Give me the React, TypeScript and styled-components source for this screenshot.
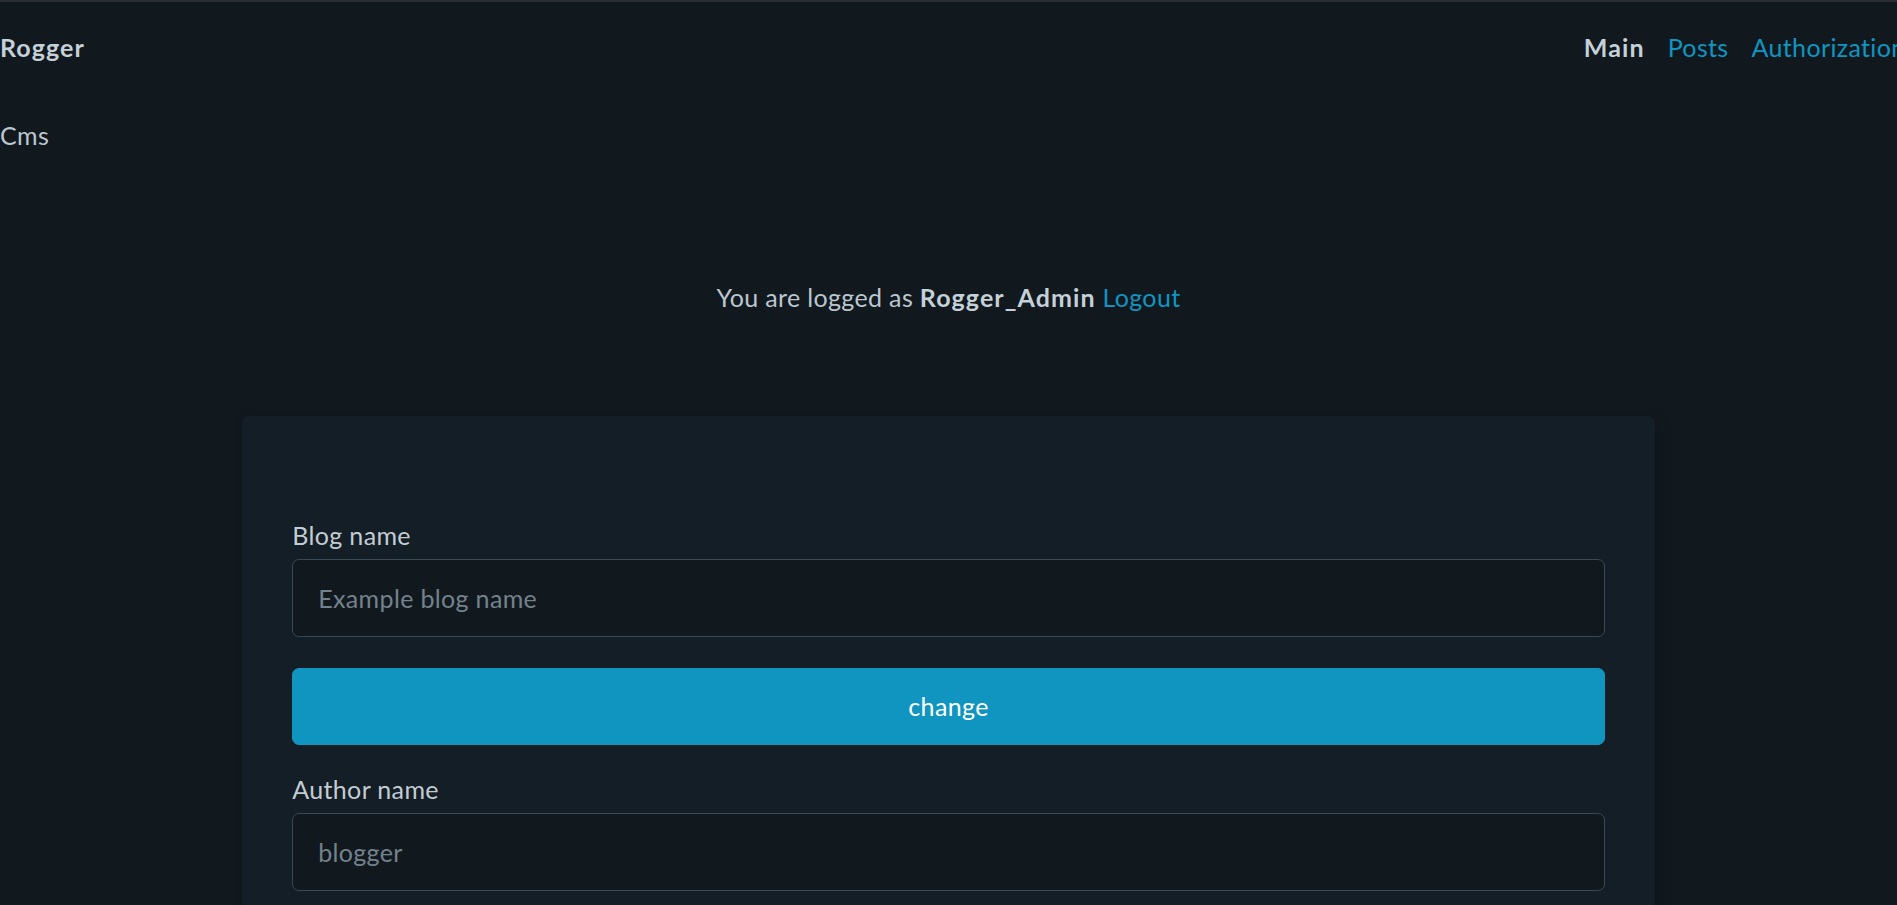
import React from "react";
import styled, { createGlobalStyle } from "styled-components";

const GlobalStyle = createGlobalStyle`
  html, body {
    margin: 0;
    padding: 0;
    background: #11191f;
  }
  body {
    overflow-x: hidden;
    font-family: Lato, "Noto Sans", sans-serif;
    font-size: 25px;
    line-height: 1.5;
    letter-spacing: 0.35px;
    color: #bbc6ce;
  }
  * { box-sizing: border-box; }
`;

const Shell = styled.div`
  min-height: 100vh;
  border-top: 2px solid #2b2c30;
  background: #11191f;
`;

const Nav = styled.nav`
  display: flex;
  justify-content: space-between;
  align-items: center;
`;

const NavList = styled.ul<{ $edge: "left" | "right" }>`
  display: flex;
  align-items: center;
  list-style: none;
  margin: 0;
  padding: 0;
  margin-left: ${(p) => (p.$edge === "left" ? "-12.5px" : "0")};
  margin-right: ${(p) => (p.$edge === "right" ? "-20px" : "0")};
`;

const NavItem = styled.li`
  padding: 26.5px 11.5px;
  white-space: nowrap;
  &:first-child {
    padding-left: 12.5px;
  }
`;

const Strong = styled.strong`
  font-weight: 700;
  letter-spacing: 1.1px;
  color: #c5d0d8;
`;

const Link = styled.a`
  color: #1095c1;
  text-decoration: none;
  cursor: pointer;
`;

const Main = styled.main`
  display: flex;
  flex-direction: column;
`;

const Title = styled.p`
  margin: 24px 0 0;
`;

const Status = styled.p`
  margin: 124.5px 0 0;
  text-align: center;
`;

const Card = styled.article`
  width: 1412.5px;
  margin: 100px auto 0;
  padding: 100.5px 50px 50px;
  background: #141e26;
  border-radius: 7px;
  box-shadow: 0 0 0 1px rgba(0, 0, 0, 0.04), 4px 2px 14px rgba(0, 0, 0, 0.14);
  display: flex;
  flex-direction: column;
`;

const Field = styled.label`
  display: flex;
  flex-direction: column;
  color: #c3ccd3;
`;

const FieldLabel = styled.span`
  margin-bottom: 5px;
`;

const Input = styled.input`
  width: 100%;
  height: 77.5px;
  padding: 18.75px 25px;
  font: inherit;
  letter-spacing: inherit;
  color: #bbc6ce;
  background: #11191f;
  border: 1px solid #374956;
  border-radius: 7px;
  outline: none;
  &::placeholder {
    color: #73828c;
  }
`;

const Button = styled.button<{ $spaceTop?: number }>`
  width: 100%;
  height: 77.5px;
  margin: ${(p) => p.$spaceTop ?? 31}px 0 25.5px;
  font: inherit;
  letter-spacing: inherit;
  color: #ffffff;
  background: #1095c1;
  border: 1px solid #1095c1;
  border-radius: 7px;
  cursor: pointer;
`;

export default function App() {
  return (
    <>
      <GlobalStyle />
      <Shell>
        <Nav>
          <NavList $edge="left">
            <NavItem>
              <Strong>Rogger</Strong>
            </NavItem>
          </NavList>
          <NavList $edge="right">
            <NavItem>
              <Strong>Main</Strong>
            </NavItem>
            <NavItem>
              <Link>Posts</Link>
            </NavItem>
            <NavItem>
              <Link>Authorization</Link>
            </NavItem>
          </NavList>
        </Nav>
        <Main>
          <Title>Cms</Title>
          <Status>
            You are logged as <Strong>Rogger_Admin</Strong> <Link>Logout</Link>
          </Status>
          <Card>
            <Field>
              <FieldLabel>Blog name</FieldLabel>
              <Input placeholder="Example blog name" />
            </Field>
            <Button>change</Button>
            <Field>
              <FieldLabel>Author name</FieldLabel>
              <Input placeholder="blogger" />
            </Field>
          </Card>
        </Main>
      </Shell>
    </>
  );
}
